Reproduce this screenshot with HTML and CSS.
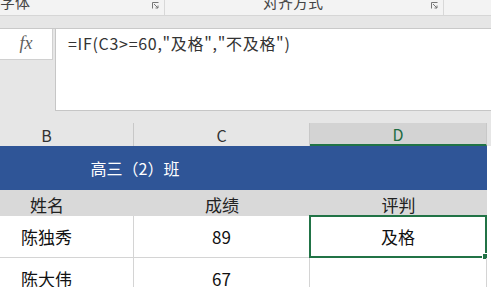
FILE: index.html
```html
<!DOCTYPE html>
<html lang="zh-CN">

<head>
    <meta charset="UTF-8">
    <meta name="viewport" content="width=device-width, initial-scale=1.0">
    <title>评判 - 及格</title>
    <link rel="stylesheet" href="styles.css">
</head>

<body>
    <div class="screen">
        <!-- ribbon group labels, cut at the top -->
        <div class="ribbon">
            <div class="group group-font">
                <span class="group-label">字体</span>
                <svg class="launcher" viewBox="0 0 7 7"><path d="M0.5 6.5V0.5H6.5" /><path d="M2 2L6 6M3.5 6H6V3.5" /></svg>
            </div>
            <div class="group group-align">
                <span class="group-label">对齐方式</span>
                <svg class="launcher" viewBox="0 0 7 7"><path d="M0.5 6.5V0.5H6.5" /><path d="M2 2L6 6M3.5 6H6V3.5" /></svg>
            </div>
            <div class="group group-rest"></div>
        </div>
        <div class="band"></div>

        <!-- formula bar -->
        <div class="fbar">
            <div class="fx"><i>fx</i></div>
            <div class="formula">=IF(C3&gt;=60,"及格","不及格")</div>
        </div>

        <!-- sheet -->
        <div class="sheet">
            <div class="colhead">B</div>
            <div class="colhead">C</div>
            <div class="colhead active">D</div>
            <div class="colhead extra"></div>

            <div class="cell title span2">高三（2）班</div>
            <div class="cell title"></div>
            <div class="cell blank"></div>

            <div class="cell head">姓名</div>
            <div class="cell head">成绩</div>
            <div class="cell head">评判</div>
            <div class="cell blank"></div>

            <div class="cell data">陈独秀</div>
            <div class="cell data">89</div>
            <div class="cell data selected">及格<span class="handle"></span></div>
            <div class="cell blank"></div>

            <div class="cell data last">陈大伟</div>
            <div class="cell data last">67</div>
            <div class="cell data last"></div>
            <div class="cell blank"></div>
        </div>
    </div>
</body>

</html>
```

FILE: styles.css
```css
body {
    margin: 0;
    font-family: "Noto Sans CJK SC", "Noto Sans", sans-serif;
}

.screen {
    width: 491px;
    height: 287px;
    overflow: hidden;
    background: #e6e6e6;
}

/* ribbon */
.ribbon {
    display: flex;
    height: 15px;
    background: #f3f3f3;
    border-bottom: 1px solid #d6d6d6;
    overflow: hidden;
}

.group {
    display: flex;
    align-items: flex-start;
    border-right: 1px solid #d8d8d8;
    box-sizing: border-box;
}

.group-font {
    width: 165px;
    padding-left: 0;
}

.group-align {
    width: 279px;
    padding-left: 98px;
}

.group-rest {
    flex: 1;
    border-right: none;
}

.group-label {
    font-size: 15px;
    line-height: 15px;
    color: #444;
    margin-top: -6px;
}

.launcher {
    width: 7px;
    height: 7px;
    margin-top: 2px;
    margin-left: auto;
    margin-right: 5px;
    fill: none;
    stroke: #777;
    stroke-width: 1;
}

.band {
    height: 12px;
    background: #e6e6e6;
    border-bottom: 1px solid #c9c9c9;
}

/* formula bar */
.fbar {
    display: flex;
    height: 82px;
    background: #e6e6e6;
}

.fx {
    width: 52px;
    height: 30px;
    background: #fff;
    border-right: 1px solid #d0d0d0;
    border-bottom: 1px solid #d0d0d0;
    display: flex;
    align-items: center;
    justify-content: center;
}

.fx i {
    font-family: "Liberation Serif", serif;
    font-size: 18px;
    color: #5f5f5f;
    margin-top: -2px;
}

.formula {
    flex: 1;
    margin-left: 2px;
    background: #fff;
    border-left: 1px solid #c6c6c6;
    border-bottom: 1px solid #c6c6c6;
    padding: 4px 0 0 12px;
    font-size: 16px;
    line-height: 20px;
    letter-spacing: 0.7px;
    color: #333;
}

/* sheet grid */
.sheet {
    display: grid;
    grid-template-columns: 174px 176px 177px 10px;
    grid-template-rows: 23px 44px 26px 42px 40px;
    margin-top: 12px;
    margin-left: -40px;
    background: #fff;
}

.colhead {
    display: flex;
    align-items: center;
    justify-content: center;
    background: #e6e6e6;
    border-right: 1px solid #c8c8c8;
    font-size: 16px;
    color: #333;
}

.colhead.active {
    background: #d3d3d3;
    color: #1e6b41;
    border-bottom: 2px solid #217346;
}

.colhead.extra {
    border-right: none;
}

.cell {
    display: flex;
    align-items: center;
    justify-content: center;
    font-size: 17px;
    color: #111;
    position: relative;
}

.cell.title {
    background: #2f5597;
    color: #fff;
    font-size: 16px;
}

.span2 {
    grid-column: span 2;
}

.cell.head {
    background: #d9d9d9;
    color: #222;
    padding-top: 2px;
}

.cell.data {
    border-right: 1px solid #d4d4d4;
    border-bottom: 1px solid #d4d4d4;
}

.cell.last {
    border-bottom: none;
}

.cell.blank {
    background: #fff;
}

.cell.selected {
    border: 2px solid #217346;
    margin: -1px 0 0 -1px;
}

.handle {
    position: absolute;
    right: -4px;
    bottom: -4px;
    width: 5px;
    height: 5px;
    background: #217346;
    border: 1px solid #fff;
}
```
